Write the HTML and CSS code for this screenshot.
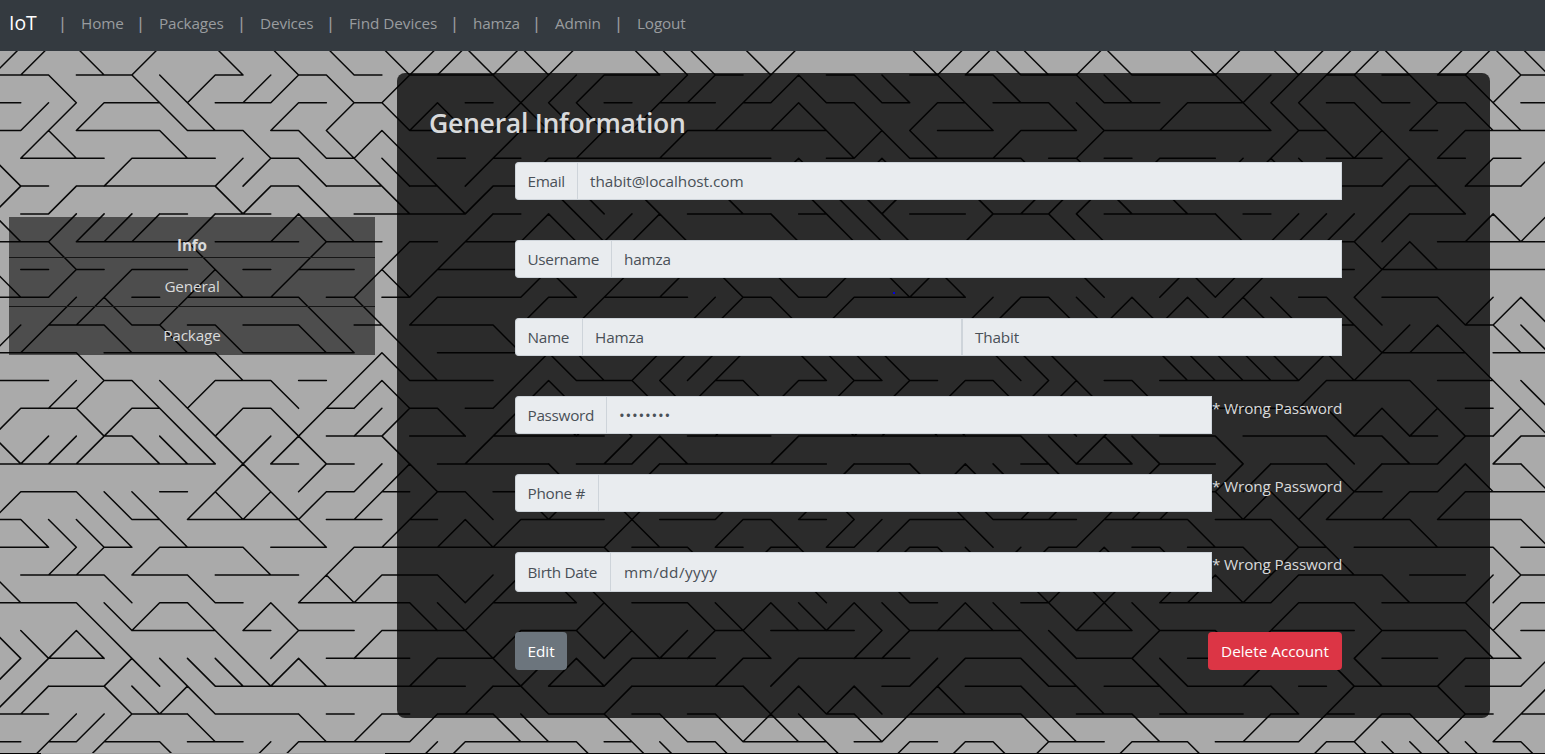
FILE: index.html
```html
<!DOCTYPE html>
<html lang="en">
<head>
<meta charset="utf-8">
<title>IoT</title>
<link rel="stylesheet" href="styles.css">
</head>
<body>
<svg class="maze" width="1545" height="754" aria-hidden="true"><path class="maze-lines"/></svg>
<nav class="navbar">
  <a class="brand">IoT</a>
  <span class="bar">|</span><a class="link w-home">Home</a>
  <span class="bar">|</span><a class="link w-packages">Packages</a>
  <span class="bar">|</span><a class="link w-devices">Devices</a>
  <span class="bar">|</span><a class="link w-find">Find Devices</a>
  <span class="bar">|</span><a class="link w-user">hamza</a>
  <span class="bar">|</span><a class="link w-admin">Admin</a>
  <span class="bar">|</span><a class="link">Logout</a>
</nav>
<main class="layout">
  <aside class="side">
    <div class="side-item side-head">Info</div>
    <div class="side-item">General</div>
    <div class="side-item">Package</div>
  </aside>
  <section class="card">
    <h3 class="title">General Information</h3>
    <div class="form">
      <div class="row"><div class="group"><span class="label w-email">Email</span><span class="field email">thabit@localhost.com</span></div></div>
      <div class="row"><div class="group"><span class="label w-username">Username</span><span class="field">hamza</span></div></div>
      <div class="row"><div class="group"><span class="label w-name">Name</span><span class="field">Hamza</span><span class="field">Thabit</span></div></div>
      <div class="row"><div class="group"><span class="label w-password">Password</span><span class="field dots">••••••••</span></div><span class="error">* Wrong Password</span></div>
      <div class="row"><div class="group"><span class="label w-phone">Phone #</span><span class="field"></span></div><span class="error">* Wrong Password</span></div>
      <div class="row tall"><div class="group"><span class="label w-birth">Birth Date</span><span class="field date">mm/dd/yyyy</span></div><span class="error">* Wrong Password</span></div>
      <div class="actions"><button class="btn edit">Edit</button><button class="btn delete">Delete Account</button></div>
    </div>
  </section>
</main>
<i class="dot"></i>
<div class="bottom-edge"></div>
<script src="maze.js"></script>
</body>
</html>
```
FILE: styles.css
```css
* { box-sizing: border-box; }
body {
  margin: 0;
  width: 1545px;
  height: 754px;
  overflow: hidden;
  position: relative;
  background: #aaa;
  color: #d9dadb;
  font: 15.3px/24px "Segoe UI", "Open Sans", "Noto Sans", sans-serif;
}
.maze { position: absolute; left: 0; top: 0; z-index: -1; }
.maze-lines { fill: none; stroke: #080808; stroke-width: 1.5; stroke-linecap: round; }
.navbar {
  display: flex;
  align-items: center;
  height: 51px;
  padding: 0 0 6px 9px;
  background: #343a40;
  color: #999c9f;
}
.brand { width: 45px; color: #fff; font-size: 19.4px; }
.bar { width: 17px; text-align: center; font-weight: 600; }
.link { margin-left: 10px; letter-spacing: -0.15px; }
.w-home { width: 51px; }
.w-packages { width: 74px; }
.w-devices { width: 62px; }
.w-find { width: 97px; letter-spacing: -0.05px; }
.w-user { width: 55px; }
.w-admin { width: 55px; }
.layout { display: flex; align-items: flex-start; gap: 22px; padding: 22px 55px 0 9px; }
.side { width: 366px; margin-top: 144px; background: rgba(0, 0, 0, .55); text-align: center; letter-spacing: -0.15px; }
.side-item { height: 49px; padding-top: 16px; border-bottom: 1px solid #161616; }
.side-item:last-child { height: 48px; border: 0; }
.side-head { height: 41px; font-weight: 700; }
.card {
  flex: 1;
  height: 645px;
  padding: 33px 32px 0;
  border-radius: 8px;
  background: rgba(0, 0, 0, .75);
}
.title { margin: 0; font-size: 26.6px; font-weight: 600; line-height: 34px; letter-spacing: -0.3px; white-space: nowrap; }
.form { width: 827px; margin: 22px 0 0 86px; }
.row { display: flex; height: 38px; margin-bottom: 40px; }
.row.tall { height: 40px; }
.group { flex: 1; display: flex; color: #495057; }
.label, .field {
  display: flex;
  align-items: center;
  padding: 0 12px;
  border: 1px solid #ced4da;
  background: #e9ecef;
  white-space: nowrap;
  letter-spacing: -0.15px;
}
.label { padding-left: 11.5px; border-radius: 4px 0 0 4px; border-right: 0; letter-spacing: -0.3px; }
.field { flex: 1; min-width: 0; }
.w-email { width: 62px; }
.w-username { width: 96px; }
.w-name { width: 67px; }
.w-password { width: 91px; }
.w-phone { width: 83px; }
.w-birth { width: 95px; }
.email { letter-spacing: -0.05px; }
.dots { letter-spacing: 0.75px; }
.date { padding-left: 13px; letter-spacing: 0.45px; }
.error { width: 130px; white-space: nowrap; letter-spacing: -0.15px; }
.actions { display: flex; justify-content: space-between; }
.btn { height: 38px; padding: 0; border: 0; border-radius: 4px; color: #fff; font: inherit; }
.edit { width: 52px; background: #6c757d; }
.delete { width: 134px; background: #dc3545; }
.dot { position: absolute; left: 893px; top: 292px; width: 2px; height: 2px; background: #00d; }
.bottom-edge {
  position: absolute;
  left: 0;
  top: 753px;
  width: 1545px;
  height: 1px;
  background: linear-gradient(90deg, #000 41px, #999 41px 385px, #000 385px);
}
```
FILE: maze.js
```js
// Each character is one cell: a line along its top edge or one of its diagonals.
// Spaces only group the cells by fourteen.
const rows = String.raw`
//-\-/--\-\-\- \//\/\/--\\\-\ /----\//\\-/\- -\/-\///\-//\\
--\--\\/-//-\- /---\///--//-/ /\-\\-\-\--\\- --\///-\-\-\/-
-///--\\--/-/- \/\-/\\\-/--/- /\-\-/-\--\\-- /--\\\-\-/-\\-
-/\---\--\-\\/ \---/--/--/--- --\/\\--/--/-- ----/-\/\-/---
\---/---//-\-\ \\-/-/-------- /\-/\----\-\-/ --//\\--/\-/-/
/-/-----\/-\-- \-\/--\\-\--\- -\\\/--\-///\- \-------/-\--
\-////-/--/\\- ---/-/\\//\--- \-\\\--/--\\-- --\-/////--/\/
--\----\---/-- /-/----------- -------------- -------\/\----
\-/-/--/\-/--/ \/---/\-/-/-\- \-/-\/\----\-- /\//---/------
--//\-/----\-\ -/---/-/---//- \-/----//-\\/\ /\/\\-\\--\//\
//--\-\-\--\\- \---\--------- -------------- -------\//\-\\
---\----\----/ \\---/\\-////- -\\\\---\\\--- \\\\\/\/---\--
--//-\\/--\-// \---//\--\\/-\ /-/-/-/-\//\-\ -----/---\--\\
/--\/-\\/-\/-/ /-\-/-\/\---/- --\//\\---\-/- ------\/\/\-/\
\///-\\\\//\-- \--/----//\--- /--------\\/\\ --\---\-\-/-/-
--------/\-/-/ /\----\--/---- --/--\/\\-\--/ --//--\/--/\-\
/--\\\-/\/\/-/ -/-\-\/-\/--/- -/\---\\-//-// /-\/\//-/-/---
-\\\\-\----\-- /-/\/---/\--/- \-///--\---/-- -\--\\---\---\
--//-/---\--/- --------\--\-/ -\-//-\\//-/\- \--\/-\-----\-
\---\--\---/\/ --\//-\\------ -\--\----\/\/- //\//---\--//-
---\\/-\-/\--- -\\/---/\--\\/ \\/\\-/\\-\/\\ ----/--\---\/-
\\/\\---\-/--/ ---\/--\/\//-\ ---//----\\--/ --\/---/---\\-
//--/\\\\\/\-- -/--\//\/---/- /----//--\\--\ \--/--\\--/--/
//--\\/\------ ---/-\--/----\ /\/\-/\--\-\-- \---\-/---\--/
--///--\---\-/ -/--\\--\-\-\/ \\-\/----\\--\ ---/-/-/-\/-/-
-/-/--\--//--- -//----\-\\-\- --\-/-/-\/--/- -\---/-\\\\\-\
`.trim().split("\n").map(row => row.replaceAll(" ", ""));

const step = 27.78, left = -7, top0 = 47.2;
let d = "";
rows.forEach((row, r) => {
  [...row].forEach((cell, c) => {
    const x1 = left + c * step, x2 = x1 + step;
    const y1 = top0 + r * step, y2 = y1 + step;
    if (cell === "-") d += `M${x1} ${y1}H${x2}`;
    else if (cell === "\\") d += `M${x1} ${y1}L${x2} ${y2}`;
    else d += `M${x1} ${y2}L${x2} ${y1}`;
  });
});
document.querySelector(".maze-lines").setAttribute("d", d);
```
